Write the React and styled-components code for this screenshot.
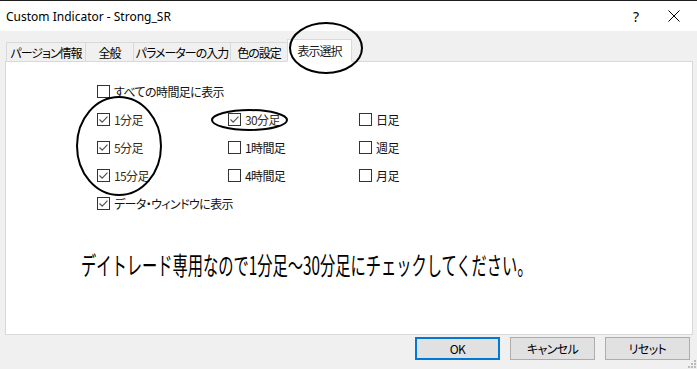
import React from 'react'
import styled, { createGlobalStyle } from 'styled-components'

const GlobalStyle = createGlobalStyle`
  html, body { margin: 0; padding: 0; background: #f0f0f0; }
  body { font-family: "Noto Sans CJK JP", "Noto Sans", sans-serif; }
`;

const Window = styled.div`
  position: relative;
  width: 697px;
  height: 369px;
  display: flex;
  flex-direction: column;
  background: #f0f0f0;
  overflow: hidden;
`;

const TitleBar = styled.div`
  height: 30px;
  border-top: 1px solid #1c1c1c;
  background: #fff;
  display: flex;
  align-items: center;
  padding-left: 6px;
  font-family: "Noto Sans", "Open Sans", sans-serif;
  font-size: 12px;
  color: #000;
`;

const Title = styled.div`
  flex: 1;
  margin-top: 1px;
`;

const TitleButton = styled.div`
  width: ${p => p.$w}px;
  height: 30px;
  display: flex;
  align-items: center;
  justify-content: center;
  font-size: 14px;
`;

const Body = styled.div`
  flex: 1;
  display: flex;
  flex-direction: column;
  padding: 8px 4px 0 5px;
`;

const TabStrip = styled.div`
  display: flex;
  align-items: flex-end;
  height: 22px;
  padding-left: 2px;
`;

const Tab = styled.div`
  height: ${p => (p.$active ? 23 : 19)}px;
  width: ${p => p.$w}px;
  box-sizing: border-box;
  display: flex;
  align-items: center;
  justify-content: center;
  background: ${p => (p.$active ? '#fff' : '#f0f0f0')};
  border: 1px solid #d9d9d9;
  border-bottom: ${p => (p.$active ? '1px solid #fff' : 'none')};
  margin-left: -1px;
  margin-bottom: ${p => (p.$active ? '-1px' : '0')};
  position: relative;
  z-index: ${p => (p.$active ? 2 : 1)};
  font-size: 12px;
  font-feature-settings: "palt";
  letter-spacing: -1px;
  color: ${p => (p.$active ? '#1a1a1a' : '#000')};
  white-space: nowrap;
`;

const Panel = styled.div`
  height: 274px;
  box-sizing: border-box;
  background: #fff;
  border: 1px solid #d9d9d9;
  padding: 23px 0 0 91px;
  position: relative;
  z-index: 1;
`;

const Grid = styled.div`
  display: grid;
  grid-template-columns: 131px 131px 131px;
  grid-auto-rows: 28px;
`;

const Check = styled.label`
  grid-column: ${p => (p.$span ? '1 / span 3' : 'auto')};
  display: flex;
  align-items: center;
  gap: 3px;
  height: 13px;
  font-size: 12px;
  font-feature-settings: "palt";
  letter-spacing: -0.6px;
  color: ${p => (p.$tint ? '#3a2c14' : '#111')};
  white-space: nowrap;
`;

const Box = styled.span`
  width: 13px;
  height: 13px;
  box-sizing: border-box;
  border: 1px solid #333;
  background: #fff;
  display: flex;
  align-items: center;
  justify-content: center;
  margin-right: 1px;
`;

const Notice = styled.div`
  margin-top: 25px;
  margin-left: -16px;
  font-family: "Noto Sans CJK JP", sans-serif;
  font-size: 25px;
  line-height: 28px;
  color: #000;
  white-space: nowrap;
  transform: scaleX(0.61);
  transform-origin: left center;
`;

const Footer = styled.div`
  display: flex;
  justify-content: flex-end;
  gap: 10px;
  padding: 2px 3px 0 0;
`;

const Button = styled.div`
  width: 85px;
  height: 23px;
  box-sizing: border-box;
  display: flex;
  align-items: center;
  justify-content: center;
  background: #e1e1e1;
  border: ${p => (p.$default ? '2px solid #0078d7' : '1px solid #adadad')};
  font-size: 12px;
  font-feature-settings: "palt";
  letter-spacing: -0.6px;
  color: #000;
  font-family: "Noto Sans CJK JP", "Noto Sans", sans-serif;
`;

const Grip = styled.svg`
  position: absolute;
  right: 1px;
  bottom: 1px;
`;

const Overlay = styled.svg`
  position: absolute;
  left: 0;
  top: 0;
  pointer-events: none;
  z-index: 5;
`;

const CheckMark = () => (
  <svg width="11" height="11" viewBox="0 0 11 11">
    <path d="M1.5 5.5 L4.2 8.2 L9.5 2.6" fill="none" stroke="#555" strokeWidth="1.2" />
  </svg>
);

const CheckBox = ({ checked, label, span, tint }) => (
  <Check $span={span} $tint={tint}>
    <Box>{checked && <CheckMark />}</Box>
    {label}
  </Check>
);

const tabs = [
  { label: 'パージョン情報', w: 80 },
  { label: '全般', w: 49 },
  { label: 'パラメーターの入力', w: 98 },
  { label: '色の設定', w: 58 },
  { label: '表示選択', w: 65, active: true },
];

const rows = [
  [{ label: '1分足', checked: true, tint: true }, { label: '30分足', checked: true, tint: true }, { label: '日足' }],
  [{ label: '5分足', checked: true, tint: true }, { label: '1時間足' }, { label: '週足' }],
  [{ label: '15分足', checked: true, tint: true }, { label: '4時間足' }, { label: '月足' }],
];

export default function App() {
  return (
    <Window>
      <GlobalStyle />
      <TitleBar>
        <Title>Custom Indicator - Strong_SR</Title>
        <TitleButton $w={30}>?</TitleButton>
        <TitleButton $w={46}>
          <svg width="12" height="12" viewBox="0 0 12 12">
            <path d="M0.5 0.5 L11.5 11.5 M11.5 0.5 L0.5 11.5" stroke="#000" strokeWidth="1" />
          </svg>
        </TitleButton>
      </TitleBar>
      <Body>
        <TabStrip>
          {tabs.map(t => (
            <Tab key={t.label} $w={t.w} $active={t.active}>{t.label}</Tab>
          ))}
        </TabStrip>
        <Panel>
          <Grid>
            <CheckBox span label="すべての時間足に表示" />
            {rows.flat().map(c => (
              <CheckBox key={c.label} {...c} />
            ))}
            <CheckBox span checked label="データ・ウィンドウに表示" />
          </Grid>
          <Notice>デイトレード専用なので1分足～30分足にチェックしてください。</Notice>
        </Panel>
        <Footer>
          <Button $default>OK</Button>
          <Button>キャンセル</Button>
          <Button>リセット</Button>
        </Footer>
      </Body>
      <Grip width="8" height="8" viewBox="0 0 8 8">
        {[[6, 0], [6, 3], [3, 3], [6, 6], [3, 6], [0, 6]].map(([x, y]) => (
          <rect key={`${x}-${y}`} x={x} y={y} width="2" height="2" fill="#bcbcbc" />
        ))}
      </Grip>
      <Overlay width="697" height="369">
        <ellipse cx="326" cy="48" rx="36" ry="25" fill="none" stroke="#000" strokeWidth="2" />
        <ellipse cx="119" cy="146" rx="42" ry="49" fill="none" stroke="#000" strokeWidth="2" />
        <ellipse cx="249.5" cy="120" rx="37.5" ry="10" fill="none" stroke="#000" strokeWidth="2" />
      </Overlay>
    </Window>
  );
}
